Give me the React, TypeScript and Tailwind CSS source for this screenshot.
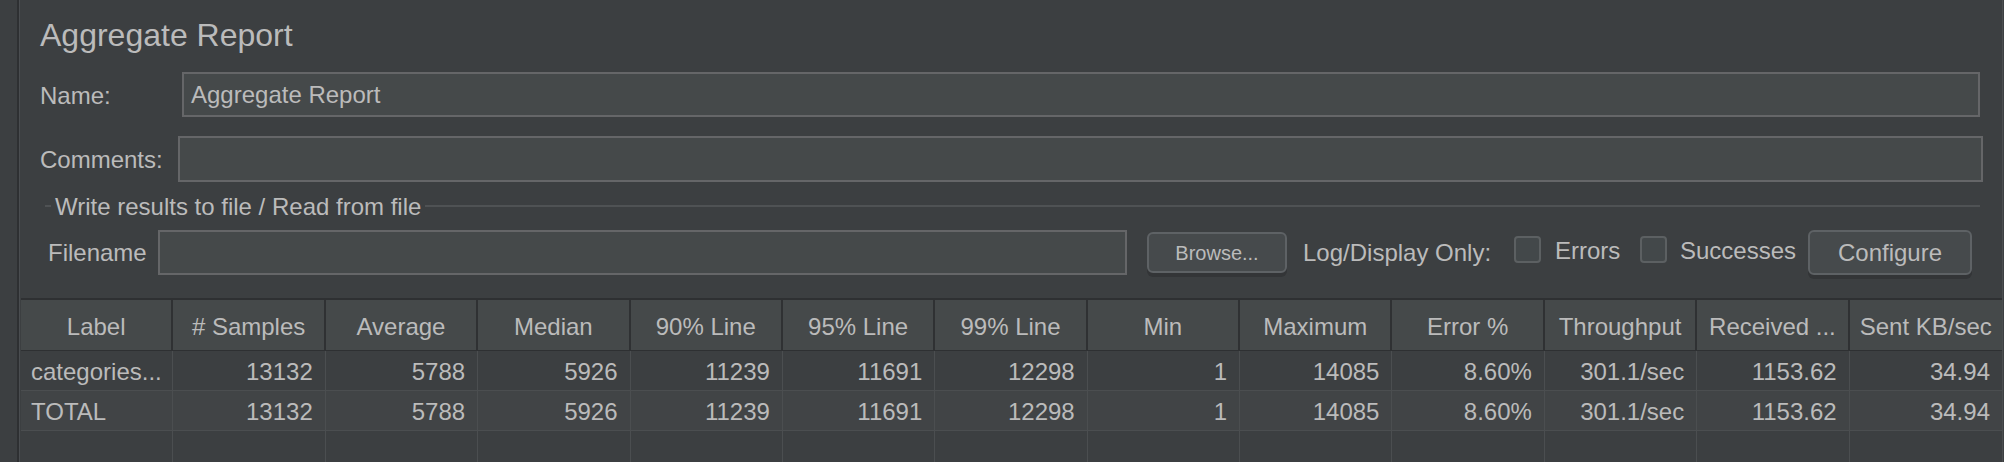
import React from "react";

const headers = [
  "Label",
  "# Samples",
  "Average",
  "Median",
  "90% Line",
  "95% Line",
  "99% Line",
  "Min",
  "Maximum",
  "Error %",
  "Throughput",
  "Received ...",
  "Sent KB/sec",
];

const rowData = [
  ["categories...", "13132", "5788", "5926", "11239", "11691", "12298", "1", "14085", "8.60%", "301.1/sec", "1153.62", "34.94"],
  ["TOTAL", "13132", "5788", "5926", "11239", "11691", "12298", "1", "14085", "8.60%", "301.1/sec", "1153.62", "34.94"],
];

function Checkbox() {
  return <div className="w-[27px] h-[27px] shrink-0 rounded-[4px] border-2 border-[#5c6062] bg-[#43484a] self-start mt-[6px]" />;
}

export default function App() {
  return (
    <div className="w-[2004px] h-[462px] bg-[#3c3f41] flex overflow-hidden text-[#bbbbbb] font-['Liberation_Sans',Arial,sans-serif]">
      <div className="w-[17px] shrink-0 bg-[#3c3f41]" />
      <div className="w-[2px] shrink-0 bg-[#2e3032]" />
      <div className="w-[1px] shrink-0 bg-[#4a4d50]" />
      <div className="w-[1982px] shrink-0 flex flex-col overflow-hidden">
        {/* Title */}
        <div className="shrink-0 pl-[20px] mt-[17px] h-[36px] leading-[36px] text-[32px] whitespace-nowrap">Aggregate Report</div>

        {/* Name */}
        <div className="shrink-0 flex items-center h-[45px] mt-[19px] text-[24px]">
          <div className="w-[162px] shrink-0 pl-[20px] pt-[2px]">Name:</div>
          <div className="w-[1798px] h-[45px] shrink-0 border-2 border-[#656668] bg-[#45494a] flex items-center pl-[7px] pt-[1px]">
            Aggregate Report
          </div>
        </div>

        {/* Comments */}
        <div className="shrink-0 flex items-center h-[46px] mt-[19px] text-[24px]">
          <div className="w-[158px] shrink-0 pl-[20px] pt-[1px]">Comments:</div>
          <div className="w-[1805px] h-[46px] shrink-0 border-2 border-[#656668] bg-[#45494a]" />
        </div>

        {/* Group title */}
        <div className="shrink-0 flex items-center h-[48px] text-[24px]">
          <div className="ml-[25px] w-[6px] h-[2px] bg-[#4f5254] shrink-0" />
          <span className="ml-[4px] leading-[24px] mt-[2px] whitespace-nowrap">Write results to file / Read from file</span>
          <div className="ml-[4px] flex-1 h-[2px] bg-[#4f5254] mr-[22px]" />
        </div>

        {/* Filename row */}
        <div className="shrink-0 flex items-center h-[45px] text-[24px]">
          <div className="w-[138px] shrink-0 pl-[28px] pt-[1px]">Filename</div>
          <div className="w-[969px] h-[45px] shrink-0 border-2 border-[#656668] bg-[#45494a]" />
          <div className="ml-[20px] w-[140px] h-[41px] shrink-0 rounded-[6px] border-2 border-[#5e6265] bg-[#464a4c] shadow-[0_4px_0_#333537] flex items-center justify-center text-[20px] pt-[1px]">
            Browse...
          </div>
          <div className="ml-[16px] w-[211px] shrink-0 whitespace-nowrap">Log/Display Only:</div>
          <Checkbox />
          <div className="w-[99px] shrink-0 pl-[14px] -mt-[3px]">Errors</div>
          <Checkbox />
          <div className="w-[141px] shrink-0 pl-[13px] -mt-[3px]">Successes</div>
          <div className="w-[164px] h-[45px] shrink-0 rounded-[6px] border-2 border-[#5e6265] bg-[#464a4c] shadow-[0_4px_0_#333537] flex items-center justify-center pt-[1px]">
            Configure
          </div>
        </div>

        {/* Table */}
        <div className="shrink-0 mt-[23px] ml-[1px] w-[1981px] flex flex-col text-[24px]">
          <div className="shrink-0 h-[2px] bg-[#2e3032]" />
          <div className="shrink-0 grid grid-cols-[repeat(13,minmax(0,1fr))] h-[50px] bg-[#45494a]">
            {headers.map((h, i) => (
              <div
                key={h}
                className={`flex items-center justify-center whitespace-nowrap overflow-hidden pt-[3px] ${i < headers.length - 1 ? "border-r-2 border-[#2f3133]" : ""}`}
              >
                {h}
              </div>
            ))}
          </div>
          <div className="shrink-0 h-[1px] bg-[#2e3032]" />
          {rowData.map((r, ri) => (
            <React.Fragment key={ri}>
              <div className={`shrink-0 grid grid-cols-[repeat(13,minmax(0,1fr))] h-[39px] ${ri === 1 ? "bg-[#414446]" : "bg-[#3c3f41]"}`}>
                {r.map((c, i) => (
                  <div
                    key={i}
                    className={`flex items-center whitespace-nowrap overflow-hidden pt-[2px] ${i === 0 ? "justify-start pl-[10px]" : "justify-end pr-[12px]"} ${i < r.length - 1 ? "border-r border-[#4b4e50]" : ""}`}
                  >
                    {c}
                  </div>
                ))}
              </div>
              <div className="shrink-0 h-[1px] bg-[#4b4e50]" />
            </React.Fragment>
          ))}
          <div className="shrink-0 grid grid-cols-[repeat(13,minmax(0,1fr))] h-[40px] bg-[#3c3f41]">
            {headers.map((h, i) => (
              <div key={h} className={i < headers.length - 1 ? "border-r border-[#4b4e50]" : ""} />
            ))}
          </div>
        </div>
      </div>
      <div className="w-[1px] shrink-0 bg-[#4b4e50]" />
      <div className="w-[1px] shrink-0 bg-[#3c3f41]" />
    </div>
  );
}
